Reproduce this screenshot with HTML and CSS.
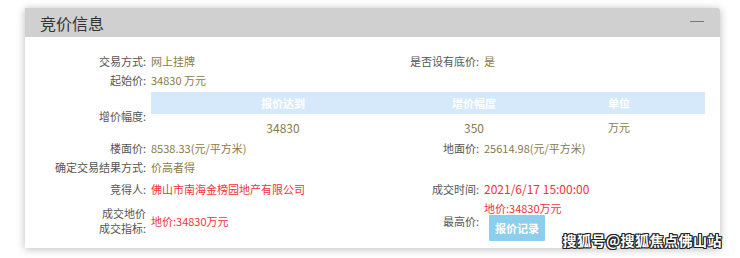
FILE: index.html
```html
<!DOCTYPE html>
<html lang="zh-CN">
<head>
  <meta charset="UTF-8" />
  <title>竞价信息</title>
  <link rel="stylesheet" href="styles.css">
</head>
<body>
  <div class="panel">
    <div class="panel-head">
      <h3>竞价信息</h3>
      <span class="collapse"></span>
    </div>

    <div class="panel-body">
      <div class="row r1">
        <span class="label">交易方式:</span><span class="val">网上挂牌</span>
        <span class="label">是否设有底价:</span><span class="val">是</span>
      </div>
      <div class="row">
        <span class="label">起始价:</span><span class="val">34830 万元</span>
      </div>

      <div class="row step">
        <span class="label">增价幅度:</span>
        <table class="step-table">
          <tr><th>报价达到</th><th>增价幅度</th><th>单位</th></tr>
          <tr><td>34830</td><td>350</td><td>万元</td></tr>
        </table>
      </div>

      <div class="row">
        <span class="label">楼面价:</span><span class="val">8538.33(元/平方米)</span>
        <span class="label">地面价:</span><span class="val">25614.98(元/平方米)</span>
      </div>
      <div class="row">
        <span class="label">确定交易结果方式:</span><span class="val">价高者得</span>
      </div>
      <div class="row r-win">
        <span class="label">竞得人:</span><span class="val red">佛山市南海金榜园地产有限公司</span>
        <span class="label">成交时间:</span><span class="val red big">2021/6/17 15:00:00</span>
      </div>
      <div class="row r-last">
        <span class="label two">成交地价<br>成交指标:</span><span class="val red">地价:34830万元</span>
        <span class="label">最高价:</span>
        <span class="val top">
          <span class="red">地价:34830万元</span>
          <button class="btn">报价记录</button>
        </span>
      </div>
    </div>
  </div>

  <div class="watermark">搜狐号@搜狐焦点佛山站</div>
</body>
</html>
```

FILE: styles.css
```css
* { box-sizing: border-box; }
body {
  margin: 0;
  background: #fff;
  font-family: "Noto Sans CJK SC", "Noto Sans", sans-serif;
  font-size: 11px;
  color: #555;
  position: relative;
  height: 258px;
  overflow: hidden;
}
.panel {
  margin: 8px 0 0 25px;
  width: 695px;
  height: 240px;
  background: #fff;
  border-radius: 0 3px 0 0;
  box-shadow: 0 1px 8px rgba(0, 0, 0, 0.28);
}
.panel-head {
  height: 29px;
  background: #d0d0d0;
  border-radius: 0 3px 0 0;
  display: flex;
  align-items: center;
  justify-content: space-between;
  padding: 0 16px 0 15px;
}
.panel-head h3 {
  margin: 0;
  font-size: 16px;
  font-weight: normal;
  color: #333;
}
.collapse {
  width: 14px;
  height: 1px;
  background: #777;
  margin-bottom: 2px;
}
.panel-body { padding: 14px 15px 0 0; }
.row {
  display: grid;
  grid-template-columns: 121px 207px 116px 1fr;
  column-gap: 5px;
  align-items: center;
  height: 19px;
}
.label { text-align: right; color: #555; white-space: nowrap; }
.val { color: #8a7a48; white-space: nowrap; }
.red { color: #f4323a; }
.big { font-size: 12px; }

.row.step { height: 46px; margin-top: 3px; }
.step-table {
  grid-column: 2 / 5;
  border-collapse: collapse;
  width: 100%;
  align-self: start;
}
.step-table th {
  background: #d5e9fb;
  color: #fff;
  font-weight: bold;
  height: 22px;
  padding: 0;
}
.step-table th:nth-child(1), .step-table td:nth-child(1) { width: 264px; }
.step-table th:nth-child(2), .step-table td:nth-child(2) { width: 118px; }
.step-table td {
  text-align: center;
  color: #8a7a48;
  height: 26px;
  padding: 0;
  font-size: 12px;
}
.step-table td:nth-child(3) { font-size: 11px; }

.row.r-win { margin-top: 2px; height: 21px; }
.row.r-last { height: 40px; margin-top: 2px; }
.label.two { line-height: 15px; }
.val.top {
  display: flex;
  flex-direction: column;
  align-items: flex-start;
  align-self: start;
  line-height: 14px;
}
.btn {
  margin: 0 0 0 5px;
  width: 56px;
  height: 26px;
  border: none;
  border-radius: 1px;
  background: #8ccfec;
  color: #fff;
  font-family: inherit;
  font-size: 11px;
  font-weight: bold;
  padding: 0;
}
.watermark {
  position: absolute;
  right: 18px;
  bottom: 8px;
  font-size: 14px;
  font-weight: bold;
  color: #fff;
  letter-spacing: 0.5px;
  text-shadow: 1px 1px 0 #222, -1px -1px 0 #222, 1px -1px 0 #222, -1px 1px 0 #222, 0 1px 0 #222, 1px 0 0 #222, 0 -1px 0 #222, -1px 0 0 #222;
}
```
